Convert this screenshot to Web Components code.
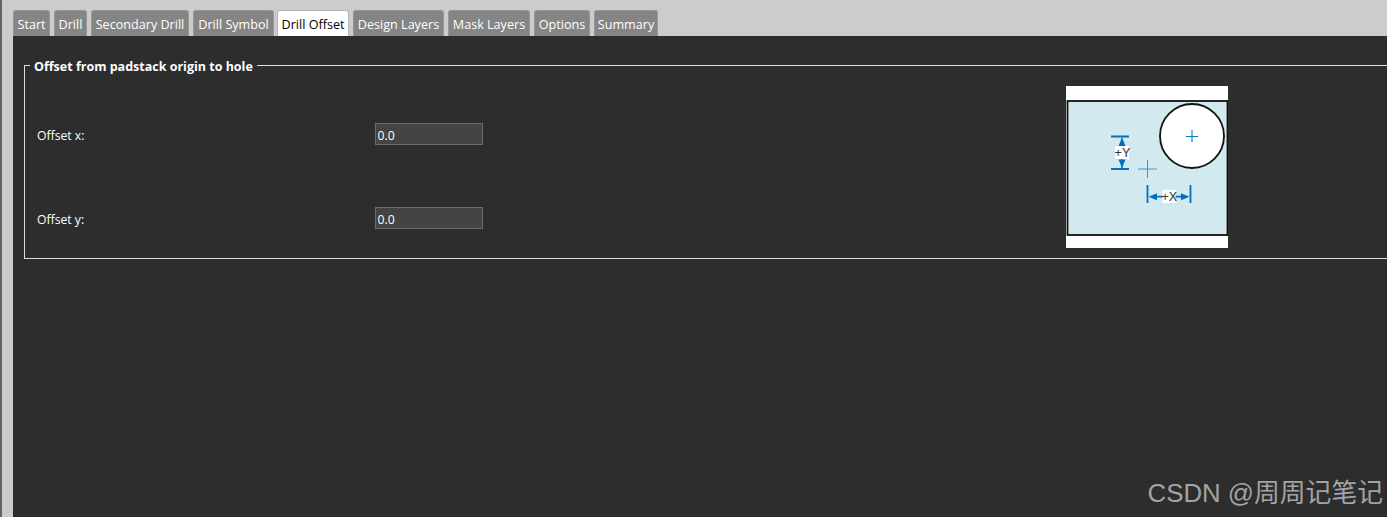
<!DOCTYPE html>
<html lang="en">
<head>
<meta charset="utf-8">
<title>Drill Offset</title>
<style>
  html, body { margin: 0; height: 100%; }
  body { background: #cccccc; overflow: hidden; font-family: "Open Sans", "Noto Sans", sans-serif; }
</style>
</head>
<body>
<wizard-page>
  <tab-item slot="tabs" width="37">Start</tab-item>
  <tab-item slot="tabs" width="33">Drill</tab-item>
  <tab-item slot="tabs" width="98">Secondary Drill</tab-item>
  <tab-item slot="tabs" width="81">Drill Symbol</tab-item>
  <tab-item slot="tabs" width="72" active>Drill Offset</tab-item>
  <tab-item slot="tabs" width="91">Design Layers</tab-item>
  <tab-item slot="tabs" width="82">Mask Layers</tab-item>
  <tab-item slot="tabs" width="56">Options</tab-item>
  <tab-item slot="tabs" width="64">Summary</tab-item>

  <group-box legend="Offset from padstack origin to hole">
    <offset-field label="Offset x:" value="0.0"></offset-field>
    <offset-field label="Offset y:" value="0.0"></offset-field>
    <offset-diagram slot="side"></offset-diagram>
  </group-box>
</wizard-page>
<water-mark>CSDN @周周记笔记</water-mark>

<script>
class WizardPage extends HTMLElement {
  constructor() {
    super();
    this.shadowDOM = this.attachShadow({ mode: "open" });
  }

  connectedCallback() {
    this.shadowDOM.innerHTML = `
      <style>
        :host {
          display: flex;
          flex-direction: column;
          height: 517px;
          border-left: 2px solid #636363;
          box-sizing: border-box;
          padding-left: 11px;
          overflow: hidden;
        }
        .tabs { display: flex; gap: 4px; height: 26px; padding-top: 10px; flex: none; }
        .panel { flex: 1; background: #2d2d2d; padding: 20px 0 0 11px; overflow: hidden; }
      </style>
      <div class="tabs"><slot name="tabs"></slot></div>
      <div class="panel"><slot></slot></div>
    `;
  }
}

class TabItem extends HTMLElement {
  constructor() {
    super();
    this.shadowDOM = this.attachShadow({ mode: "open" });
  }

  connectedCallback() {
    this.shadowDOM.innerHTML = `
      <style>
        :host {
          display: flex;
          align-items: center;
          justify-content: center;
          box-sizing: border-box;
          width: ${this.getAttribute("width")}px;
          height: 26px;
          border: 1px solid #969696;
          border-bottom: none;
          border-radius: 3px 3px 0 0;
          background: #858585;
          color: #fff;
          font-size: 12.6px;
          white-space: nowrap;
          padding-top: 2px;
        }
        :host([active]) { background: #fff; border-color: #b5b5b5; color: #000; margin-left: -1px; }
      </style>
      <slot></slot>
    `;
  }
}

class GroupBox extends HTMLElement {
  constructor() {
    super();
    this.shadowDOM = this.attachShadow({ mode: "open" });
  }

  connectedCallback() {
    this.shadowDOM.innerHTML = `
      <style>
        :host { display: block; margin-right: -20px; }
        fieldset {
          margin: 0;
          padding: 11px 0 10px 12px;
          border: 1px solid #dcdcdc;
          min-width: 0;
        }
        legend {
          margin-left: -7px;
          padding: 2px 4px 0;
          color: #fff;
          font-size: 12.5px;
          font-weight: 700;
          line-height: 17px;
        }
        .inner { display: flex; gap: 583px; }
        .fields { display: flex; flex-direction: column; gap: 62px; padding-top: 37px; }
      </style>
      <fieldset>
        <legend>${this.getAttribute("legend")}</legend>
        <div class="inner">
          <div class="fields"><slot></slot></div>
          <slot name="side"></slot>
        </div>
      </fieldset>
    `;
  }
}

class OffsetField extends HTMLElement {
  constructor() {
    super();
    this.shadowDOM = this.attachShadow({ mode: "open" });
  }

  connectedCallback() {
    this.shadowDOM.innerHTML = `
      <style>
        :host {
          display: grid;
          grid-template-columns: 338px 108px;
          align-items: center;
          color: #fff;
          font-size: 12.2px;
        }
        span { padding-top: 2px; }
        input {
          box-sizing: border-box;
          width: 108px;
          height: 22px;
          margin: 0;
          padding: 2px 1.5px 0;
          border: 1px solid #6c6c6c;
          background: #444444;
          color: #fff;
          font: inherit;
          outline: none;
        }
      </style>
      <span>${this.getAttribute("label")}</span>
      <input type="text" value="${this.getAttribute("value")}">
    `;
  }
}

class OffsetDiagram extends HTMLElement {
  constructor() {
    super();
    this.shadowDOM = this.attachShadow({ mode: "open" });
  }

  connectedCallback() {
    this.shadowDOM.innerHTML = `
      <style>
        :host { display: block; width: 162px; height: 162px; }
        svg { display: block; }
        text { font-family: "Liberation Sans", sans-serif; font-size: 12.5px; fill: #333; }
      </style>
      <svg width="162" height="162" viewBox="0 0 162 162">
        <rect width="162" height="162" fill="#fff"/>
        <rect x="1.5" y="15" width="160" height="134" fill="#d1e9ef" stroke="#111" stroke-width="1.8"/>
        <circle cx="126" cy="50" r="32" fill="#fff" stroke="#111" stroke-width="1.8"/>

        <path d="M120 50.5H132M126 44V56" stroke="#0a78c2" stroke-width="1.1" fill="none"/>
        <path d="M72 83H91" stroke="#6aaed8" stroke-width="1.4" fill="none"/>
        <path d="M81.5 74V92" stroke="#3f95d0" stroke-width="1" fill="none"/>

        <g stroke="#0070c0" stroke-width="1.8" fill="none">
          <path d="M45 50.5H63M45 83H63"/>
          <path d="M81.5 99V117M124.5 99V117"/>
          <path d="M56 52V60M56 73V82" stroke-width="1.2"/>
          <path d="M88 110.7H97M109 110.7H118" stroke-width="1.8"/>
        </g>
        <g fill="#0070c0">
          <path d="M56 51.5L59.5 60H52.5Z"/>
          <path d="M56 82L59.5 73.5H52.5Z"/>
          <path d="M82.5 110.7L91 107.2V114.2Z"/>
          <path d="M123.5 110.7L115 107.2V114.2Z"/>
        </g>

        <rect x="49" y="60" width="14" height="13" fill="#fff"/>
        <text x="48.6" y="71">+Y</text>
        <rect x="96.5" y="104" width="13" height="13" fill="#fff"/>
        <text x="95.5" y="115">+X</text>
      </svg>
    `;
  }
}

class WaterMark extends HTMLElement {
  constructor() {
    super();
    this.shadowDOM = this.attachShadow({ mode: "open" });
  }

  connectedCallback() {
    this.shadowDOM.innerHTML = `
      <style>
        :host {
          position: absolute;
          right: 4px;
          top: 476px;
          color: #a3a3a3;
          font: 25.8px/34px "Liberation Sans", "Noto Sans CJK SC", sans-serif;
          white-space: nowrap;
        }
      </style>
      <slot></slot>
    `;
  }
}

customElements.define("wizard-page", WizardPage);
customElements.define("tab-item", TabItem);
customElements.define("group-box", GroupBox);
customElements.define("offset-field", OffsetField);
customElements.define("offset-diagram", OffsetDiagram);
customElements.define("water-mark", WaterMark);
</script>
</body>
</html>
